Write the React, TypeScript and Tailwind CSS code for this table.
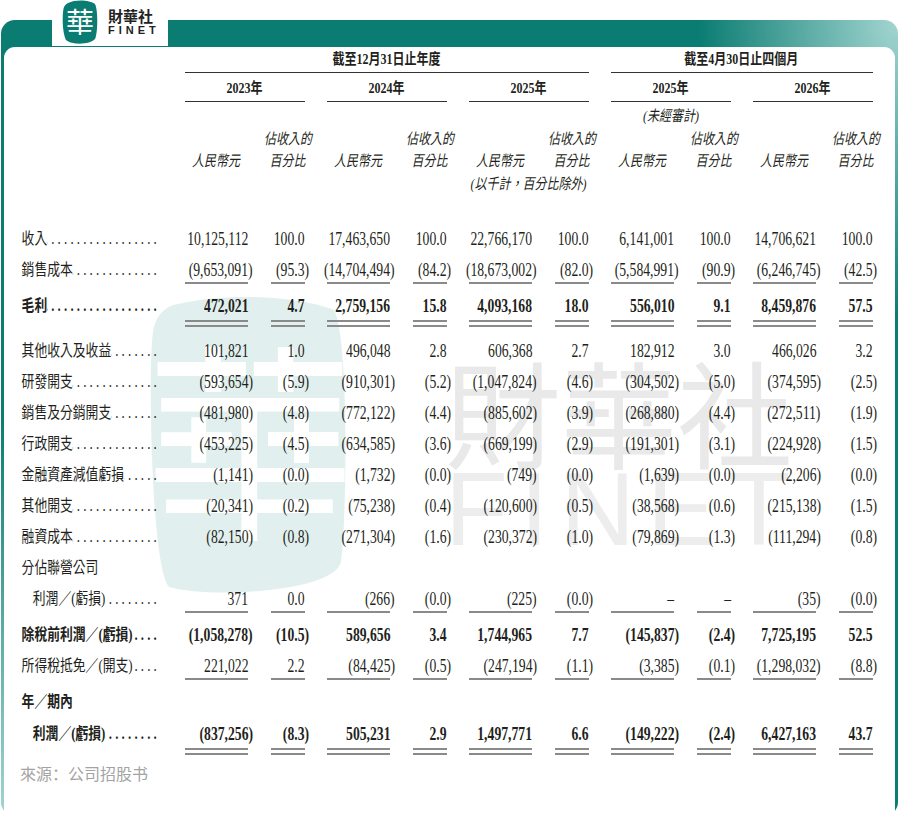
import React from "react";

const serif = "font-['Liberation_Serif','Noto_Sans_CJK_TC',serif]";
const cols = "grid grid-cols-[142.5px_repeat(5,63px_34px)] gap-x-[22.5px]";
const DOTS = ".".repeat(40);

type Rule = "s" | "d" | undefined;

interface RowData {
  label: string;
  v?: string[];
  bold?: boolean;
  indent?: boolean;
  rule?: Rule;
  mt?: string;
  dots?: boolean;
}

const rows: RowData[] = [
  {
    label: "收入 ",
    v: ["10,125,112", "100.0", "17,463,650", "100.0", "22,766,170", "100.0", "6,141,001", "100.0", "14,706,621", "100.0"],
  },
  {
    label: "銷售成本",
    v: ["(9,653,091)", "(95.3)", "(14,704,494)", "(84.2)", "(18,673,002)", "(82.0)", "(5,584,991)", "(90.9)", "(6,246,745)", "(42.5)"],
    rule: "s",
  },
  {
    label: "毛利 ",
    v: ["472,021", "4.7", "2,759,156", "15.8", "4,093,168", "18.0", "556,010", "9.1", "8,459,876", "57.5"],
    bold: true,
    rule: "d",
    mt: "mt-[5px]",
  },
  {
    label: "其他收入及收益",
    v: ["101,821", "1.0", "496,048", "2.8", "606,368", "2.7", "182,912", "3.0", "466,026", "3.2"],
    mt: "mt-[14px]",
  },
  {
    label: "研發開支",
    v: ["(593,654)", "(5.9)", "(910,301)", "(5.2)", "(1,047,824)", "(4.6)", "(304,502)", "(5.0)", "(374,595)", "(2.5)"],
  },
  {
    label: "銷售及分銷開支",
    v: ["(481,980)", "(4.8)", "(772,122)", "(4.4)", "(885,602)", "(3.9)", "(268,880)", "(4.4)", "(272,511)", "(1.9)"],
  },
  {
    label: "行政開支",
    v: ["(453,225)", "(4.5)", "(634,585)", "(3.6)", "(669,199)", "(2.9)", "(191,301)", "(3.1)", "(224,928)", "(1.5)"],
  },
  {
    label: "金融資產減值虧損 ",
    v: ["(1,141)", "(0.0)", "(1,732)", "(0.0)", "(749)", "(0.0)", "(1,639)", "(0.0)", "(2,206)", "(0.0)"],
  },
  {
    label: "其他開支",
    v: ["(20,341)", "(0.2)", "(75,238)", "(0.4)", "(120,600)", "(0.5)", "(38,568)", "(0.6)", "(215,138)", "(1.5)"],
  },
  {
    label: "融資成本",
    v: ["(82,150)", "(0.8)", "(271,304)", "(1.6)", "(230,372)", "(1.0)", "(79,869)", "(1.3)", "(111,294)", "(0.8)"],
  },
  { label: "分佔聯營公司", dots: false },
  {
    label: "利潤／(虧損)",
    indent: true,
    v: ["371", "0.0", "(266)", "(0.0)", "(225)", "(0.0)", "–", "–", "(35)", "(0.0)"],
    rule: "s",
  },
  {
    label: "除稅前利潤／(虧損)",
    v: ["(1,058,278)", "(10.5)", "589,656", "3.4", "1,744,965", "7.7", "(145,837)", "(2.4)", "7,725,195", "52.5"],
    bold: true,
    mt: "mt-[5px]",
  },
  {
    label: "所得稅抵免／(開支)",
    v: ["221,022", "2.2", "(84,425)", "(0.5)", "(247,194)", "(1.1)", "(3,385)", "(0.1)", "(1,298,032)", "(8.8)"],
    rule: "s",
  },
  { label: "年／期內", bold: true, dots: false, mt: "mt-[5px]" },
  {
    label: "利潤／(虧損)",
    indent: true,
    bold: true,
    v: ["(837,256)", "(8.3)", "505,231", "2.9", "1,497,771", "6.6", "(149,222)", "(2.4)", "6,427,163", "43.7"],
    rule: "d",
    mt: "mt-[1px]",
  },
];

const Num = ({ v, bold }: { v: string; bold?: boolean }) => {
  const neg = v.startsWith("(") && v.endsWith(")");
  return (
    <span className={`inline-block shrink-0 origin-right scale-x-[0.76] whitespace-nowrap ${bold ? "font-bold" : ""}`}>
      {neg ? v.slice(0, -1) : v}
      {neg && <span className="inline-block w-0">)</span>}
    </span>
  );
};

const TableRow = ({ row }: { row: RowData }) => {
  const ruleCls =
    row.rule === "s"
      ? "border-b-2 border-[#8a8a8a]"
      : row.rule === "d"
        ? "border-b-[7px] border-double border-[#8a8a8a] pb-[2px]"
        : "";

  return (
    <div className={`${cols} h-[31px] ${row.mt ?? ""}`}>
      <div className="mt-[2.5px] h-[25px]">
        <div
          className={`flex h-[25px] w-[175px] origin-left scale-x-80 items-center text-[16px] ${
            row.indent ? "pl-[16px]" : "pl-[2px]"
          } ${row.bold ? "font-bold" : ""}`}
        >
          <span className="shrink-0 whitespace-nowrap">{row.label}</span>
          {row.dots !== false && (
            <span className="flex flex-1 justify-end overflow-hidden">
              <span className="whitespace-nowrap tracking-[4px]">{DOTS}</span>
            </span>
          )}
        </div>
      </div>
      {row.v?.map((val, i) => (
        <div
          key={i}
          className={`mt-[2.5px] flex justify-end self-start pt-[1px] text-[18px] leading-[24px] ${ruleCls}`}
        >
          <Num v={val} bold={row.bold} />
        </div>
      ))}
    </div>
  );
};

const LogoMark = () => (
  <svg width="36" height="44" viewBox="0 0 36 44">
    <path
      d="M6 3 C14 -1 28 0 33 4 C36 10 36 32 33 39 C28 45 9 45 4 40 C0 33 0 12 2 7 C3 5 4 4 6 3Z"
      fill="#0b7c72"
    />
    <text
      x="18"
      y="33"
      textAnchor="middle"
      fontSize="28"
      fontWeight="400"
      fill="#ffffff"
      fontFamily="'Noto Sans CJK TC', sans-serif"
    >
      華
    </text>
  </svg>
);

const BigMark = () => (
  <svg width="204" height="302" viewBox="0 0 204 302">
    <path
      d="M30 8 C80 -4 150 0 186 14 C201 40 199 220 193 266 C186 296 62 303 21 291 C3 271 0 72 5 36 C8 18 18 10 30 8 Z"
      fill="#e1f0ee"
    />
    <text
      x="102"
      y="228"
      textAnchor="middle"
      fontSize="210"
      fontWeight="400"
      fill="#ffffff"
      fontFamily="'Noto Sans CJK TC', sans-serif"
    >
      華
    </text>
  </svg>
);

const Header = () => {
  const sub = "inline-block shrink-0 scale-x-80 whitespace-nowrap text-[15px] italic";
  const head = "inline-block shrink-0 scale-x-80 whitespace-nowrap text-[15px] font-bold";
  const years = ["2023年", "2024年", "2025年", "2025年", "2026年"];

  return (
    <div className="mt-[24px]">
      <div className={cols}>
        <div className="col-start-2 col-end-8 flex h-[26px] items-center justify-center border-b-[1.5px] border-[#333]">
          <span className={head}>截至12月31日止年度</span>
        </div>
        <div className="col-start-8 col-end-12 flex h-[26px] items-center justify-center border-b-[1.5px] border-[#333]">
          <span className={head}>截至4月30日止四個月</span>
        </div>
      </div>

      <div className={cols}>
        {years.map((y, i) => (
          <div
            key={i}
            className={`${i === 0 ? "col-start-2" : ""} col-span-2 flex h-[29px] items-center justify-center border-b-[1.5px] border-[#333] pt-[2px]`}
          >
            <span className={head}>{y}</span>
          </div>
        ))}
      </div>

      <div className={cols}>
        <div className="col-start-8 col-span-2 flex h-[28px] items-center justify-center">
          <span className={sub}>(未經審計)</span>
        </div>
      </div>

      <div className={cols}>
        {["col-start-3", "col-start-5", "col-start-7", "col-start-9", "col-start-11"].map((c) => (
          <div key={c} className={`${c} flex h-[18px] items-center justify-center`}>
            <span className={sub}>佔收入的</span>
          </div>
        ))}
      </div>

      <div className={cols}>
        {years.map((_, i) => (
          <React.Fragment key={i}>
            <div className={`${i === 0 ? "col-start-2" : ""} flex h-[26px] items-center justify-center`}>
              <span className={sub}>人民幣元</span>
            </div>
            <div className="flex h-[26px] items-center justify-center">
              <span className={sub}>百分比</span>
            </div>
          </React.Fragment>
        ))}
      </div>

      <div className={cols}>
        <div className="col-start-6 col-span-2 flex h-[20px] items-center justify-center">
          <span className={sub}>(以千計，百分比除外)</span>
        </div>
      </div>
    </div>
  );
};

export default function App() {
  return (
    <div className="relative h-[836px] w-[899px] overflow-hidden bg-white pt-[20px]">
      <div className="ml-[1px] h-[796px] w-[897px] rounded-[14px] bg-[#0a7c72] bg-[image:radial-gradient(70px_400px_at_0%_100%,#a3d5d1,transparent),radial-gradient(200px_300px_at_100%_0%,#a3d5d1,transparent)] p-[3px]">
        <div className="relative isolate h-full w-full rounded-[11px] bg-white">
          <div className="absolute left-[144px] top-[249px] -z-10">
            <BigMark />
          </div>
          <div className="absolute left-[441px] top-[304px] -z-10 whitespace-nowrap font-['Noto_Sans_CJK_TC',sans-serif] text-[116px] leading-none text-[#e9e9e9]">
            財華社
          </div>
          <div className="absolute left-[441px] top-[411px] -z-10 whitespace-nowrap font-['Liberation_Sans',sans-serif] text-[103px] leading-none tracking-[12px] text-[#ededed]">
            FINET
          </div>

          <div className={`pl-[16px] ${serif} text-[#231f20]`}>
            <Header />
            <div className="mt-[29.5px]">
              {rows.map((r, i) => (
                <TableRow key={i} row={r} />
              ))}
            </div>
            <div className="mt-[11.5px] font-['Noto_Sans_CJK_SC',sans-serif] text-[16px] leading-[24px] text-[#a3a3a3]">
              來源：公司招股书
            </div>
          </div>
        </div>
      </div>

      <div className="absolute left-[52px] top-0 flex h-[46px] w-[116px] items-start gap-[10px] bg-white pl-[10px]">
        <LogoMark />
        <div className="flex flex-col pt-[8px]">
          <span className="font-['Noto_Sans_CJK_TC',sans-serif] text-[15px] font-bold leading-[16px] text-[#222]">
            財華社
          </span>
          <span className="font-['Liberation_Sans',sans-serif] text-[11px] font-bold leading-[12px] tracking-[4px] text-[#222]">
            FINET
          </span>
        </div>
      </div>
    </div>
  );
}
